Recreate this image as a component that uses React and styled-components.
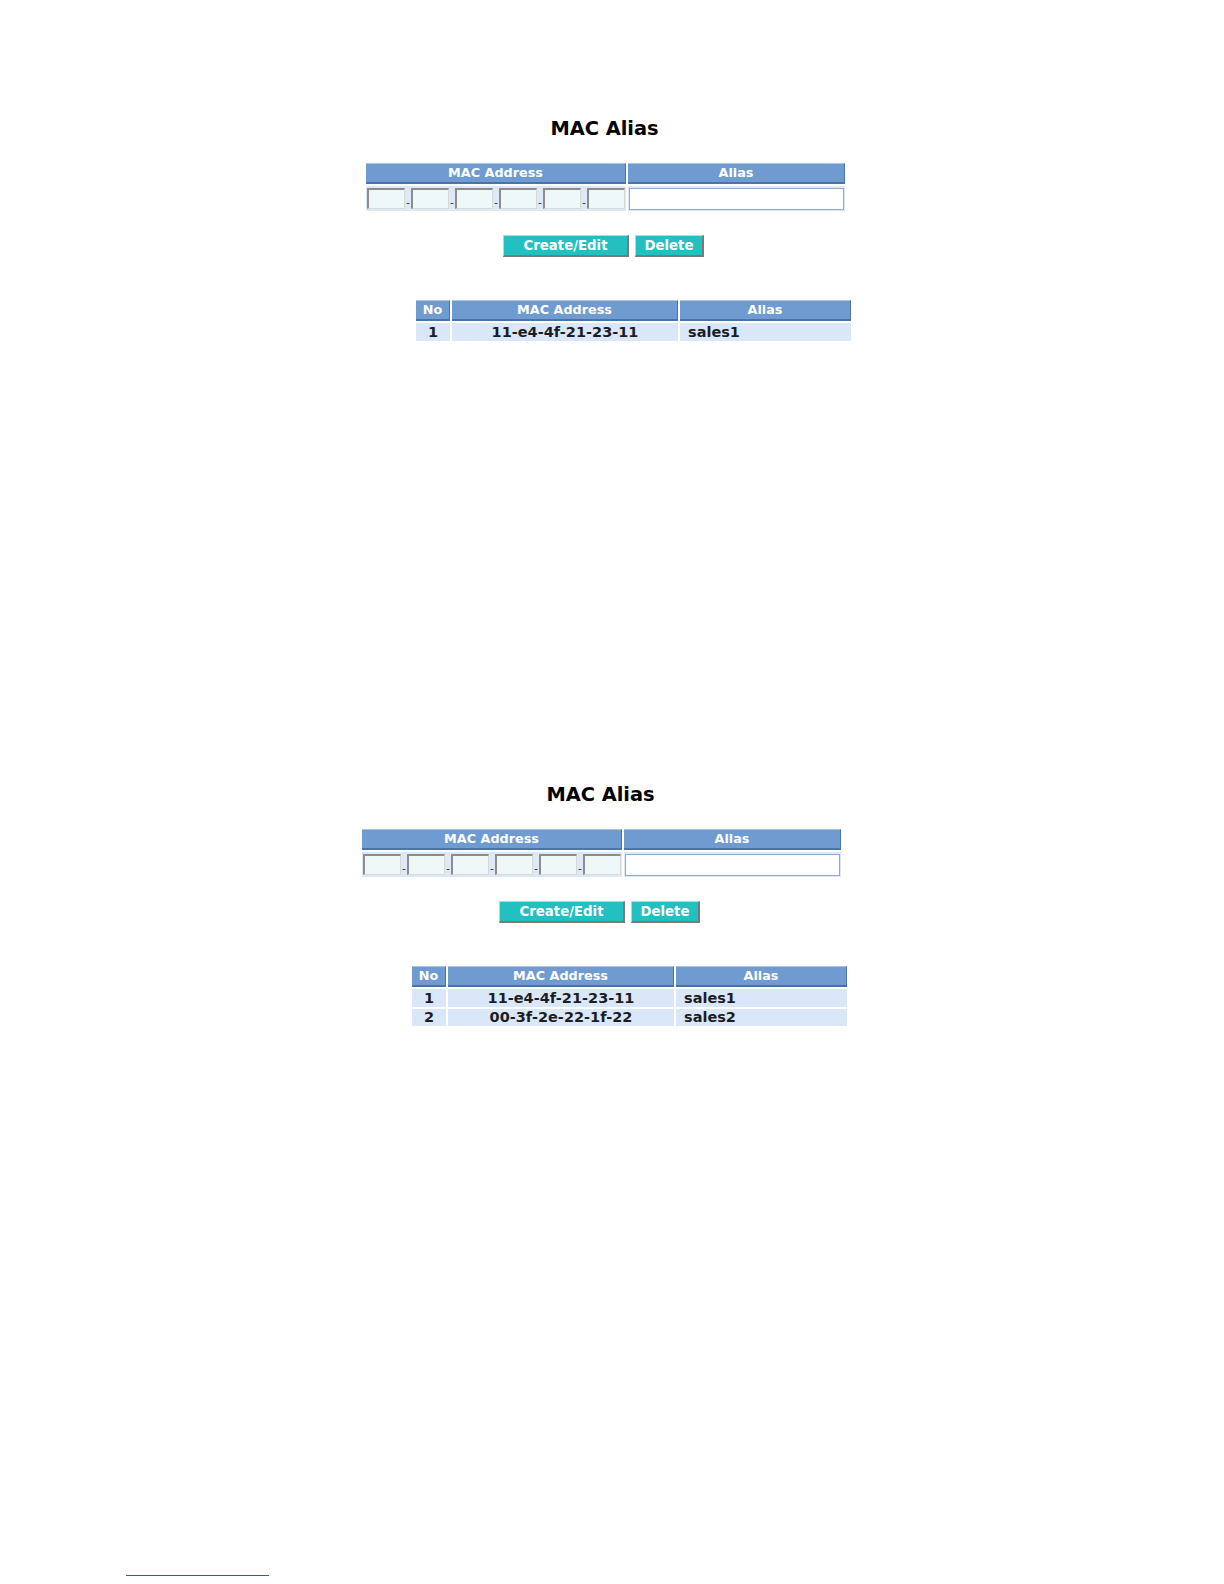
import React from "react";
import styled, { createGlobalStyle } from "styled-components";

const GlobalStyle = createGlobalStyle`
  html, body {
    margin: 0;
    padding: 0;
    background: #ffffff;
    overflow: hidden;
  }
  body {
    font-family: "DejaVu Sans", Verdana, sans-serif;
    color: #1a1a1a;
  }
`;

const Page = styled.div`
  height: 1584px;
  box-sizing: border-box;
  overflow: hidden;
  padding-top: 117px;
  display: flex;
  flex-direction: column;
  align-items: flex-start;
`;

const Section = styled.div`
  width: ${(p) => p.$width}px;
  display: flex;
  flex-direction: column;
  align-items: center;
  margin-bottom: ${(p) => p.$after}px;
`;

const Title = styled.h2`
  margin: 0;
  font-size: 19.4px;
  line-height: 24px;
  font-weight: bold;
  color: #000;
`;

const FormGrid = styled.div`
  margin-top: 22px;
  margin-left: 2px;
  display: grid;
  grid-template-columns: 260px 217px;
  column-gap: 2px;
  row-gap: 2px;
`;

const HeadCell = styled.div`
  height: 21px;
  box-sizing: border-box;
  background: #6f9bd0;
  border-top: 1px solid #a9c3e4;
  border-bottom: 2px solid #4a73a6;
  border-right: 1px solid #4a73a6;
  color: #ffffff;
  font-weight: bold;
  font-size: 12.8px;
  line-height: 18px;
  text-align: center;
`;

const InputCell = styled.div`
  height: 25px;
  box-sizing: border-box;
  background: #dde9f6;
  display: flex;
  align-items: center;
  padding: 0 1px;
  overflow: hidden;
`;

const Octet = styled.input`
  width: 38px;
  height: 21px;
  box-sizing: border-box;
  margin: 0;
  padding: 0;
  background: #eef8f8;
  border-top: 2px solid #8c8c8c;
  border-left: 2px solid #8c8c8c;
  border-right: 1px solid #d8d8d8;
  border-bottom: 1px solid #d8d8d8;
  outline: none;
`;

const Dash = styled.span`
  width: 6px;
  text-align: center;
  font-size: 11px;
  line-height: 17px;
  align-self: flex-end;
  color: #333;
`;

const AliasInput = styled.input`
  width: 215px;
  height: 22px;
  box-sizing: border-box;
  margin: 0;
  background: #ffffff;
  border: 1px solid #8fa9c8;
  outline: none;
`;

const ButtonRow = styled.div`
  margin-top: 24px;
  margin-right: 2px;
  display: flex;
  gap: 6px;
`;

const Button = styled.button`
  width: ${(p) => p.$w}px;
  height: 22px;
  box-sizing: border-box;
  margin: 0;
  padding: 0;
  background: #22c0c0;
  color: #ffffff;
  font-family: "DejaVu Sans", Verdana, sans-serif;
  font-weight: bold;
  font-size: 13.3px;
  border-top: 1px solid #9ee3e3;
  border-left: 1px solid #9ee3e3;
  border-right: 2px solid #7a7a7a;
  border-bottom: 2px solid #7a7a7a;
  cursor: pointer;
`;

const ListGrid = styled.div`
  margin-top: 43px;
  margin-left: 58px;
  display: grid;
  grid-template-columns: 34px 226px 171px;
  column-gap: 2px;
  row-gap: 2px;
`;

const DataCell = styled.div`
  height: ${(p) => p.$h}px;
  background: #d9e7f8;
  font-weight: bold;
  font-size: 14.5px;
  line-height: ${(p) => p.$h}px;
  color: #1c1c24;
  text-align: ${(p) => (p.$left ? "left" : "center")};
  padding-left: ${(p) => (p.$left ? 8 : 0)}px;
  white-space: nowrap;
`;

const FootRule = styled.div`
  margin-left: 126px;
  width: 143px;
  height: 1px;
  background: #3b55b0;
`;

function MacAliasForm({ entries, width, after }) {
  return (
    <Section $width={width} $after={after}>
      <Title>MAC Alias</Title>
      <FormGrid>
        <HeadCell>MAC Address</HeadCell>
        <HeadCell>Alias</HeadCell>
        <InputCell>
          {[0, 1, 2, 3, 4, 5].map((i) => (
            <React.Fragment key={i}>
              {i > 0 && <Dash>-</Dash>}
              <Octet type="text" maxLength={2} />
            </React.Fragment>
          ))}
        </InputCell>
        <InputCell>
          <AliasInput type="text" />
        </InputCell>
      </FormGrid>
      <ButtonRow>
        <Button $w={126}>Create/Edit</Button>
        <Button $w={69}>Delete</Button>
      </ButtonRow>
      <ListGrid>
        <HeadCell>No</HeadCell>
        <HeadCell>MAC Address</HeadCell>
        <HeadCell>Alias</HeadCell>
        {entries.map((e, i) => (
          <React.Fragment key={e.mac}>
            <DataCell $h={i === 0 ? 18 : 17}>{i + 1}</DataCell>
            <DataCell $h={i === 0 ? 18 : 17}>{e.mac}</DataCell>
            <DataCell $h={i === 0 ? 18 : 17} $left>
              {e.alias}
            </DataCell>
          </React.Fragment>
        ))}
      </ListGrid>
    </Section>
  );
}

const first = [{ mac: "11-e4-4f-21-23-11", alias: "sales1" }];
const second = [
  { mac: "11-e4-4f-21-23-11", alias: "sales1" },
  { mac: "00-3f-2e-22-1f-22", alias: "sales2" },
];

export default function App() {
  return (
    <>
      <GlobalStyle />
      <Page>
        <MacAliasForm entries={first} width={1209} after={442} />
        <MacAliasForm entries={second} width={1201} after={549} />
        <FootRule />
      </Page>
    </>
  );
}
